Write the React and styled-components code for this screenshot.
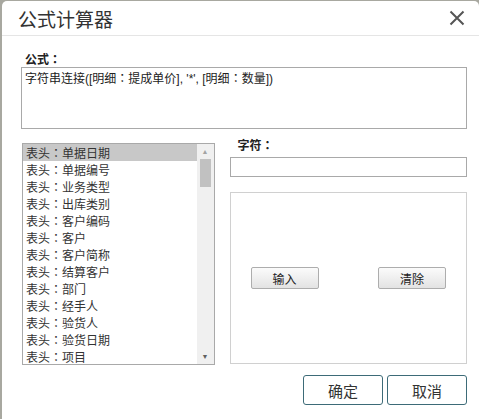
import React from 'react';
import styled, { createGlobalStyle } from 'styled-components';

const GlobalStyle = createGlobalStyle`
  html, body {
    margin: 0;
    padding: 0;
    background: #a8a8a0;
  }
  body {
    font-family: "Liberation Sans", "Noto Sans CJK SC", sans-serif;
    color: #333;
  }
  * { box-sizing: border-box; }
`;

const Dialog = styled.div`
  width: 477px;
  height: 418px;
  margin: 1px 0 0 2px;
  background: #fff;
  border-radius: 5px 5px 0 0;
  display: flex;
  flex-direction: column;
`;

const Header = styled.div`
  height: 35px;
  border-bottom: 1px solid #e5e5e5;
  display: flex;
  align-items: center;
  justify-content: space-between;
  padding: 0 13px 0 16px;
`;

const Title = styled.h1`
  margin: 0;
  font-size: 19px;
  font-weight: normal;
  color: #333;
  font-family: "Noto Sans CJK SC", sans-serif;
`;

const Close = styled.button`
  border: none;
  background: none;
  padding: 0;
  width: 18px;
  height: 18px;
  display: flex;
  align-items: center;
  justify-content: center;
`;

const Body = styled.div`
  padding: 13px 12px 0 19px;
  display: flex;
  flex-direction: column;
`;

const Label = styled.div`
  font-size: 12px;
  font-weight: bold;
  color: #222;
  height: 19px;
  line-height: 19px;
  padding-left: ${p => p.$indent || 4}px;
  font-family: "Noto Sans CJK SC", sans-serif;
`;

const Colon = styled.span`
  font-family: "Noto Sans CJK TC", sans-serif;
`;

const FormulaBox = styled.div`
  height: 62px;
  margin-top: -1px;
  border: 1px solid #a9a9a9;
  padding: 2px 3px;
  font-size: 12px;
  line-height: 16px;
  color: #222;
`;

const Row = styled.div`
  display: flex;
  margin-top: 14px;
`;

const ListBox = styled.div`
  width: 193px;
  height: 222px;
  margin-left: 1px;
  border: 1px solid #a9a9a9;
  display: flex;
  overflow: hidden;
`;

const Items = styled.div`
  flex: 1;
`;

const Item = styled.div`
  height: 17px;
  line-height: 17px;
  padding-left: 3px;
  font-size: 12px;
  color: #333;
  background: ${p => (p.$selected ? '#c8c8c8' : 'transparent')};
  white-space: nowrap;
  font-family: "Noto Sans CJK SC", sans-serif;
`;

const Scrollbar = styled.div`
  width: 17px;
  background: #f0f0f0;
  display: flex;
  flex-direction: column;
  align-items: center;
`;

const Arrow = styled.div`
  height: 15px;
  width: 100%;
  display: flex;
  align-items: center;
  justify-content: center;
  font-size: 7px;
  color: ${p => (p.$dark ? '#606060' : '#a3a3a3')};
`;

const Thumb = styled.div`
  width: 11px;
  height: 28px;
  background: #c1c1c1;
`;

const Spacer = styled.div`
  flex: 1;
`;

const RightCol = styled.div`
  width: 238px;
  margin-left: 15px;
  margin-top: -8px;
  display: flex;
  flex-direction: column;
`;

const CharInput = styled.div`
  height: 20px;
  border: 1px solid #a9a9a9;
  margin-top: 3px;
`;

const Panel = styled.div`
  margin-top: 15px;
  height: 172px;
  border: 1px solid #d0d0d0;
  display: flex;
  align-items: center;
  justify-content: space-between;
  padding: 0 20px;
`;

const SmallButton = styled.button`
  width: 68px;
  height: 22px;
  border: 1px solid #adadad;
  border-radius: 2px;
  background: linear-gradient(#fbfbfb, #e3e3e3);
  font-size: 12px;
  color: #222;
  font-family: "Noto Sans CJK SC", sans-serif;
  padding: 0;
`;

const Footer = styled.div`
  display: flex;
  justify-content: flex-end;
  gap: 4px;
  margin-top: 10px;
`;

const DialogButton = styled.button`
  width: 80px;
  height: 30px;
  border: 1px solid #3d6b78;
  border-radius: 3px;
  background: #fff;
  font-size: 15px;
  color: #333;
  font-family: "Noto Sans CJK SC", sans-serif;
  padding: 0;
`;

const fields = [
  '单据日期', '单据编号', '业务类型', '出库类别', '客户编码', '客户',
  '客户简称', '结算客户', '部门', '经手人', '验货人', '验货日期', '项目',
];

export default function App() {
  return (
    <>
      <GlobalStyle />
      <Dialog>
        <Header>
          <Title>公式计算器</Title>
          <Close>
            <svg width="16" height="16" viewBox="0 0 16 16">
              <path d="M1.5 1.5 L14.5 14.5 M14.5 1.5 L1.5 14.5" stroke="#555" strokeWidth="2" fill="none" />
            </svg>
          </Close>
        </Header>
        <Body>
          <Label>公式<Colon>：</Colon></Label>
          <FormulaBox>
            字符串连接([明细<Colon>：</Colon>提成单价], '*', [明细<Colon>：</Colon>数量])
          </FormulaBox>
          <Row>
            <ListBox>
              <Items>
                {fields.map((f, i) => (
                  <Item key={f} $selected={i === 0}>表头<Colon>：</Colon>{f}</Item>
                ))}
              </Items>
              <Scrollbar>
                <Arrow>▲</Arrow>
                <Thumb />
                <Spacer />
                <Arrow $dark>▼</Arrow>
              </Scrollbar>
            </ListBox>
            <RightCol>
              <Label $indent={8}>字符<Colon>：</Colon></Label>
              <CharInput />
              <Panel>
                <SmallButton>输入</SmallButton>
                <SmallButton>清除</SmallButton>
              </Panel>
            </RightCol>
          </Row>
          <Footer>
            <DialogButton>确定</DialogButton>
            <DialogButton>取消</DialogButton>
          </Footer>
        </Body>
      </Dialog>
    </>
  );
}
